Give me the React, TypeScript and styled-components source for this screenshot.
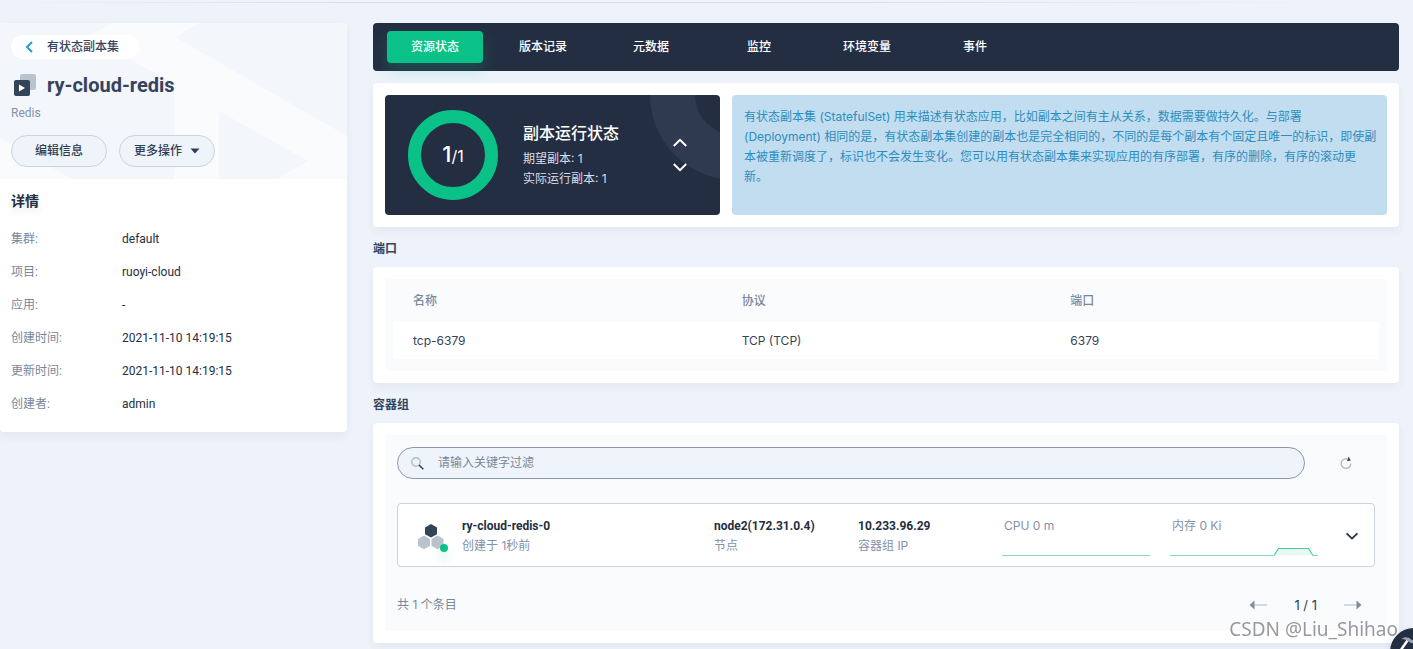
import React from 'react';
import styled, { createGlobalStyle } from 'styled-components';

const ROBOTO = `Roboto, "Noto Sans CJK SC", sans-serif`;
const INTER = `Inter, "Noto Sans CJK SC", sans-serif`;

const GlobalStyle = createGlobalStyle`
  * { box-sizing: border-box; }
  body {
    margin: 0;
    background: #eef3fb;
    color: #242e42;
    font: 400 12px/20px ${INTER};
  }
  button, input { font: inherit; color: inherit; }
  button { padding: 0; border: 0; background: none; cursor: pointer; }
  h1, h2, h3, p, dl, dd { margin: 0; }
  svg { display: block; flex: none; }
`;

const TopLine = styled.div`
  height: 1px;
  margin-top: 2px;
  background: linear-gradient(to right, transparent, #d8dee9 25%, #d8dee9 60%, transparent 95%);
`;

const Page = styled.div`
  display: flex;
  align-items: flex-start;
  gap: 26px;
  padding: 20px 14px 6px 0;
`;

const Sidebar = styled.aside`
  flex: 0 0 347px;
  overflow: hidden;
  border-radius: 4px;
  background: #fff;
  box-shadow: 0 4px 8px rgba(36, 46, 66, 0.06);
  font-family: ${ROBOTO};
`;

const SideHeader = styled.header`
  position: relative;
  padding: 12px 11px;
  background: #f9fbfd;
`;

const Backdrop = styled.svg`
  position: absolute;
  top: 0;
  left: 0;
`;

const HeaderContent = styled.div`
  position: relative;
  display: flex;
  flex-direction: column;
  align-items: flex-start;
`;

const BackLink = styled.a`
  display: flex;
  align-items: center;
  gap: 12px;
  height: 24px;
  padding: 0 20px 0 12px;
  border-radius: 12px;
  background: #fff;
  color: #36435c;
  font-weight: 500;
  text-decoration: none;
`;

const TitleRow = styled.div`
  display: flex;
  align-items: center;
  gap: 11px;
  margin: 12px 0 4px;
  padding-left: 3px;
`;

const Title = styled.h1`
  color: #36435c;
  font-size: 20px;
  line-height: 28px;
  font-weight: 700;
`;

const Subtitle = styled.p`
  color: #8491ab;
`;

const Actions = styled.div`
  display: flex;
  gap: 12px;
  margin-top: 12px;
`;

const PillButton = styled.button`
  display: flex;
  align-items: center;
  justify-content: center;
  gap: 8px;
  width: 96px;
  height: 32px;
  border: 1px solid #ccd3db;
  border-radius: 16px;
  background: #eff4fb;
  color: #303c55;
  font-weight: 500;
`;

const Details = styled.section`
  padding: 12px 11px 18px;
`;

const DetailsTitle = styled.h2`
  margin-bottom: 18px;
  font-size: 14px;
  line-height: 20px;
  font-weight: 700;
  text-shadow: 0 4px 8px rgba(36, 46, 66, 0.1);
`;

const DetailList = styled.dl`
  display: grid;
  grid-template-columns: 111px 1fr;
  row-gap: 13px;
`;

const Term = styled.dt`
  color: #79879c;
`;

const Main = styled.main`
  flex: 1;
  min-width: 0;
`;

const Tabs = styled.nav`
  display: flex;
  gap: 12px;
  padding: 8px 14px;
  border-radius: 4px;
  background: #242e42;
`;

const Tab = styled.button<{ $active?: boolean }>`
  min-width: 96px;
  height: 32px;
  border-radius: 4px;
  color: #fff;
  font-weight: 500;
  background: ${(p) => (p.$active ? '#0ac287' : 'transparent')};
  box-shadow: ${(p) => (p.$active ? '0 8px 16px rgba(10, 194, 135, 0.22)' : 'none')};
`;

const Card = styled.section`
  padding: 12px;
  border-radius: 4px;
  background: #fff;
  box-shadow: 0 4px 8px rgba(36, 46, 66, 0.06);
`;

const StatusCard = styled(Card)`
  display: flex;
  gap: 12px;
  margin-top: 12px;
`;

const ReplicaPanel = styled.div`
  position: relative;
  flex: 0 0 335px;
  display: flex;
  align-items: center;
  height: 120px;
  padding: 0 28px 0 23px;
  overflow: hidden;
  border-radius: 4px;
  background: #242e42;
  color: #d9dee8;
`;

const PanelDecor = styled.svg`
  position: absolute;
  top: 0;
  right: 0;
`;

const Gauge = styled.div`
  display: grid;
  place-items: center;
  width: 90px;
  height: 90px;
  border: 13px solid #0ac287;
  border-radius: 50%;
  color: #fff;
  font: 400 16px/24px ${INTER};
`;

const GaugeMain = styled.span`
  font-size: 22px;
  font-weight: 500;
`;

const ReplicaText = styled.div`
  flex: 1;
  margin-left: 25px;
`;

const ReplicaTitle = styled.h3`
  margin-bottom: 4px;
  color: #fff;
  font-size: 16px;
  line-height: 24px;
  font-weight: 500;
`;

const Stepper = styled.div`
  position: relative;
  display: flex;
  flex-direction: column;
`;

const IconButton = styled.button<{ $width?: number }>`
  display: grid;
  place-items: center;
  width: ${(p) => p.$width ?? 24}px;
  height: 24px;
`;

const Notice = styled.p`
  flex: 1;
  padding: 12px 8px 12px 12px;
  border-radius: 4px;
  background: #c3ddf0;
  color: #2c8dbd;
`;

const SectionTitle = styled.h2`
  margin: 12px 0 8px;
  color: #36435c;
  font-size: 12px;
  line-height: 20px;
  font-weight: 700;
`;

const TableBox = styled.div`
  padding: 0 8px 12px;
  border-radius: 4px;
  background: #f9fbfd;
`;

const Table = styled.table`
  width: 100%;
  table-layout: fixed;
  border-collapse: collapse;
  text-align: left;

  th {
    height: 43px;
    padding: 0 20px;
    color: #79879c;
    font-weight: 500;
  }
  td {
    height: 37px;
    padding: 0 20px;
    background: #fff;
    color: #36435c;
  }
`;

const PodBox = styled.div`
  padding: 12px 12px 16px;
  background: #f9fbfd;
`;

const Toolbar = styled.div`
  display: flex;
  align-items: center;
  gap: 12px;
`;

const SearchField = styled.label`
  flex: 1;
  display: flex;
  align-items: center;
  gap: 14px;
  height: 32px;
  padding: 0 13px;
  border: 1px solid #8b98b3;
  border-radius: 16px;
  background: #eff4fb;
`;

const SearchInput = styled.input`
  flex: 1;
  min-width: 0;
  padding: 0;
  border: 0;
  outline: 0;
  background: none;
  &::placeholder { color: #79879c; opacity: 1; }
`;

const PodRow = styled.article`
  display: grid;
  grid-template-columns: 32px minmax(0, 1fr) 144px 144px 168px 168px 28px;
  height: 64px;
  margin: 24px 0 28px;
  padding: 12px 8px 10px 20px;
  border: 1px solid #ccd3db;
  border-radius: 4px;
  background: #fff;
`;

const PodIcon = styled.svg`
  margin-top: 8px;
  overflow: visible;
`;

const PodCell = styled.div<{ $inset?: boolean }>`
  padding-left: ${(p) => (p.$inset ? 12 : 0)}px;
  color: #8491ab;
`;

const PodValue = styled.h3`
  color: #242e42;
  font: 700 12px/20px ${ROBOTO};
`;

const Metric = styled.div`
  display: flex;
  flex-direction: column;
  justify-content: space-between;
  width: 148px;
  color: #8491ab;
`;

const MetricLabel = styled.span`
  padding-left: 2px;
`;

const ExpandCell = styled.div`
  display: flex;
  align-items: center;
  justify-content: center;
`;

const Footer = styled.footer`
  display: flex;
  align-items: center;
  justify-content: space-between;
  height: 20px;
  color: #79879c;
`;

const Pager = styled.div`
  display: flex;
  align-items: center;
  gap: 24px;
  padding-right: 10px;
  color: #303c55;
  font-size: 13px;
`;

const Watermark = styled.span`
  position: fixed;
  right: 15px;
  bottom: 8px;
  color: #96999d;
  font: 400 19px/24px "Noto Sans", sans-serif;
  text-shadow: 1px 1px 0 #fff;
`;

const ToolBubble = styled.button`
  position: fixed;
  right: -25px;
  bottom: -27px;
  width: 48px;
  height: 48px;
  border-radius: 50%;
  background: #242e42;
  box-shadow: 0 4px 8px rgba(36, 46, 66, 0.2);
`;

const Chevron = ({ up, color = '#fff' }: { up?: boolean; color?: string }) => (
  <svg width="16" height="16" viewBox="0 0 16 16" fill="none" stroke={color} strokeWidth={up || color === '#fff' ? 2 : 1.8}>
    <path d={color === '#fff' ? (up ? 'M1.8 11 8 4.8 14.2 11' : 'M1.8 5 8 11.2 14.2 5') : 'M2.6 5.4 8 10.6 13.4 5.4'} />
  </svg>
);

const PagerArrow = ({ next }: { next?: boolean }) => (
  <svg width="18" height="10" viewBox="0 0 18 10">
    <path d={next ? 'M0 5h13' : 'M5 5h13'} stroke="#d1dae1" strokeWidth="2" />
    <path d={next ? 'M12.5 .5 17.5 5l-5 4.5Z' : 'M5.5 .5.5 5l5 4.5Z'} fill="#7e8e9c" />
  </svg>
);

const details = [
  ['集群:', 'default'],
  ['项目:', 'ruoyi-cloud'],
  ['应用:', '-'],
  ['创建时间:', '2021-11-10 14:19:15'],
  ['更新时间:', '2021-11-10 14:19:15'],
  ['创建者:', 'admin'],
];

const tabs = ['资源状态', '版本记录', '元数据', '监控', '环境变量', '事件'];

export default function App() {
  return (
    <>
      <GlobalStyle />
      <TopLine />
      <Page>
        <Sidebar>
          <SideHeader>
            <Backdrop width="347" height="156" fill="#f3f6fb" aria-hidden="true">
              <path d="M0 0h112L89 13l85 48v95H72L0 115Z" />
              <path d="M199 0h148v113L175 14Z" />
              <path d="m219 88 89 50-31 18h-58Z" />
            </Backdrop>
            <HeaderContent>
              <BackLink href="#statefulsets">
                <svg width="12" height="12" viewBox="0 0 12 12" fill="none" stroke="#1b9fd8" strokeWidth="2">
                  <path d="M9 1 4 6l5 5" />
                </svg>
                有状态副本集
              </BackLink>
              <TitleRow>
                <svg width="22" height="22" viewBox="0 0 22 22">
                  <rect x="6" width="16" height="16" rx="2" fill="#b7c4cf" />
                  <rect y="6" width="16" height="16" rx="2" fill="#324558" />
                  <path d="M5 10.5v7l6-3.5Z" fill="#fff" />
                </svg>
                <Title>ry-cloud-redis</Title>
              </TitleRow>
              <Subtitle>Redis</Subtitle>
              <Actions>
                <PillButton>编辑信息</PillButton>
                <PillButton>
                  更多操作
                  <svg width="10" height="6" viewBox="0 0 10 6" fill="#303c55">
                    <path d="M.5.5h9L5 5.5Z" />
                  </svg>
                </PillButton>
              </Actions>
            </HeaderContent>
          </SideHeader>
          <Details>
            <DetailsTitle>详情</DetailsTitle>
            <DetailList>
              {details.map(([term, value]) => (
                <React.Fragment key={term}>
                  <Term>{term}</Term>
                  <dd>{value}</dd>
                </React.Fragment>
              ))}
            </DetailList>
          </Details>
        </Sidebar>

        <Main>
          <Tabs>
            {tabs.map((name, i) => (
              <Tab key={name} $active={i === 0}>{name}</Tab>
            ))}
          </Tabs>

          <StatusCard>
            <ReplicaPanel>
              <PanelDecor width="80" height="90" aria-hidden="true">
                <circle cx="95" cy="0" r="62.5" fill="none" stroke="#2f3950" strokeWidth="45" />
              </PanelDecor>
              <Gauge>
                <span><GaugeMain>1</GaugeMain>/1</span>
              </Gauge>
              <ReplicaText>
                <ReplicaTitle>副本运行状态</ReplicaTitle>
                <p>期望副本: 1</p>
                <p>实际运行副本: 1</p>
              </ReplicaText>
              <Stepper>
                <IconButton aria-label="增加副本"><Chevron up /></IconButton>
                <IconButton aria-label="减少副本"><Chevron /></IconButton>
              </Stepper>
            </ReplicaPanel>
            <Notice>
              有状态副本集 (StatefulSet) 用来描述有状态应用，比如副本之间有主从关系，数据需要做持久化。与部署 (Deployment) 相同的是，有状态副本集创建的副本也是完全相同的，不同的是每个副本有个固定且唯一的标识，即使副本被重新调度了，标识也不会发生变化。您可以用有状态副本集来实现应用的有序部署，有序的删除，有序的滚动更新。
            </Notice>
          </StatusCard>

          <SectionTitle>端口</SectionTitle>
          <Card>
            <TableBox>
              <Table>
                <thead>
                  <tr><th>名称</th><th>协议</th><th>端口</th></tr>
                </thead>
                <tbody>
                  <tr><td>tcp-6379</td><td>TCP (TCP)</td><td>6379</td></tr>
                </tbody>
              </Table>
            </TableBox>
          </Card>

          <SectionTitle>容器组</SectionTitle>
          <Card>
            <PodBox>
              <Toolbar>
                <SearchField>
                  <svg width="13" height="13" viewBox="0 0 13 13" fill="none">
                    <circle cx="5" cy="5" r="4.2" stroke="#b0bdca" strokeWidth="1.4" />
                    <path d="m8 8 4.3 4.3" stroke="#324558" strokeWidth="1.6" />
                  </svg>
                  <SearchInput type="text" aria-label="过滤容器组" placeholder="请输入关键字过滤" />
                </SearchField>
                <IconButton $width={58} aria-label="刷新">
                  <svg width="12" height="14" viewBox="0 0 12 14" fill="none">
                    <path d="M7.2 2.9A4.8 4.8 0 1 0 10.8 7.6" stroke="#b0bdca" strokeWidth="1.4" />
                    <path d="m8.6 .6 2.2 4.2-3.8.2Z" fill="#324558" />
                  </svg>
                </IconButton>
              </Toolbar>

              <PodRow>
                <PodIcon width="32" height="28" viewBox="0 0 32 28">
                  <defs>
                    <filter id="dotGlow" x="-150%" y="-150%" width="400%" height="400%">
                      <feGaussianBlur stdDeviation="5" />
                    </filter>
                  </defs>
                  <path d="m13 0 6 3.4v6.8l-6 3.4-6-3.4V3.4Z" fill="#324558" />
                  <path d="m6 11.6 6 3.4v6.8l-6 3.4-6-3.4V15ZM19.5 11.6l6 3.4v6.8l-6 3.4-6-3.4V15Z" fill="#b7c4cf" />
                  <circle cx="26" cy="32" r="6" fill="#0ac287" opacity=".12" filter="url(#dotGlow)" />
                  <circle cx="26" cy="24" r="4" fill="#0ac287" />
                </PodIcon>
                <PodCell $inset>
                  <PodValue>ry-cloud-redis-0</PodValue>
                  <p>创建于 1秒前</p>
                </PodCell>
                <PodCell>
                  <PodValue>node2(172.31.0.4)</PodValue>
                  <p>节点</p>
                </PodCell>
                <PodCell>
                  <PodValue>10.233.96.29</PodValue>
                  <p>容器组 IP</p>
                </PodCell>
                <Metric>
                  <MetricLabel>CPU 0 m</MetricLabel>
                  <svg width="148" height="10" fill="none">
                    <path d="M0 9.5h148" stroke="#8edcc0" />
                  </svg>
                </Metric>
                <Metric>
                  <MetricLabel>内存 0 Ki</MetricLabel>
                  <svg width="148" height="10" fill="none">
                    <path d="M104 9.5 108.5 2.5h30l4.5 7Z" fill="#eaf7f2" />
                    <path d="M0 9.5h104M143 9.5h5" stroke="#8edcc0" />
                    <path d="M104 9.5 108.5 2.5h30l4.5 7" stroke="#46cda1" strokeWidth="1.2" />
                  </svg>
                </Metric>
                <ExpandCell>
                  <IconButton aria-label="展开"><Chevron color="#242e42" /></IconButton>
                </ExpandCell>
              </PodRow>

              <Footer>
                <span>共 1 个条目</span>
                <Pager>
                  <IconButton aria-label="上一页"><PagerArrow /></IconButton>
                  <span>1 / 1</span>
                  <IconButton aria-label="下一页"><PagerArrow next /></IconButton>
                </Pager>
              </Footer>
            </PodBox>
          </Card>
        </Main>
      </Page>
      <Watermark>CSDN @Liu_Shihao</Watermark>
      <ToolBubble aria-label="工具箱">
        <svg width="48" height="48" viewBox="0 0 48 48" fill="none">
          <path d="M10.5 22.5 17.5 12.5" stroke="#fff" strokeWidth="2.4" />
          <path d="M11.5 11c3-2.4 7-2.2 9.5.5l3 1-1.8 3-3-1.4C17 12 14.500 11 11.500 11Z" fill="#9aa3b3" />
        </svg>
      </ToolBubble>
    </>
  );
}
